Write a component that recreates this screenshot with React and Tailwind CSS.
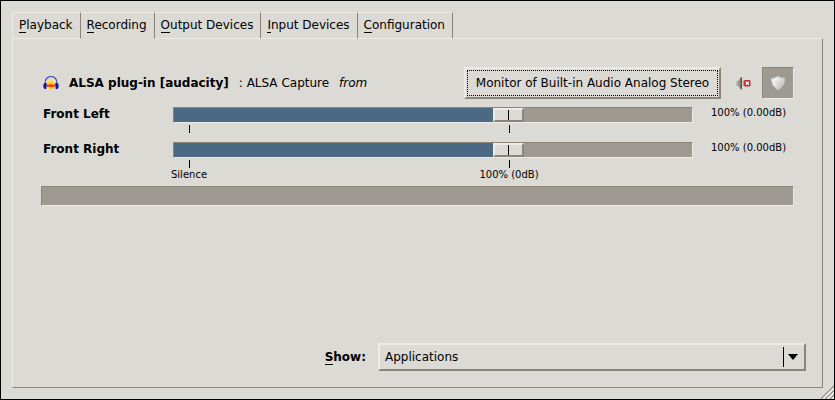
import React, { useState } from "react";

const BEVEL_OUT =
  "border-2 border-t-[#ecebe7] border-l-[#ecebe7] border-r-[#8c8478] border-b-[#8c8478]";
const BEVEL_IN =
  "border border-t-[#8c8478] border-l-[#8c8478] border-r-[#ecebe7] border-b-[#ecebe7]";

const tabs = ["Playback", "Recording", "Output Devices", "Input Devices", "Configuration"];

const MAX_VOLUME = 152.5;

function Mnemonic({ text }) {
  return (
    <span>
      <span className="border-b border-black">{text[0]}</span>
      {text.slice(1)}
    </span>
  );
}

function HeadphonesIcon() {
  return (
    <svg viewBox="0 0 16 16" className="h-4 w-4 shrink-0" aria-hidden="true">
      <defs>
        <radialGradient id="glow" cx="0.5" cy="0.6" r="0.5">
          <stop offset="0" stopColor="#ff9a10" />
          <stop offset="0.5" stopColor="#ffc81c" />
          <stop offset="1" stopColor="#ffe27a" />
        </radialGradient>
      </defs>
      <ellipse cx="8" cy="9.4" rx="4.5" ry="5.2" fill="url(#glow)" />
      <path d="M3.5 10l1.300-.8 1.100.8 1.100-1 1 .9 1.200-.9 1.100 1 2.200-1v2.300l-1.300.7-1-.5-1.200.7-1-.5-1.200.6-1-.7-1.100.5-1.200-.6z" fill="#f5331c" />
      <path d="M2 8.500C1.800 4.200 4.400 1.500 8 1.500s6.200 2.700 6 7" fill="none" stroke="#3434b8" strokeWidth="1.100" />
      <path d="M3.700 8H1.600L.4 9.600v2.600l1.200 1.800h1.700zM12.300 8h2.100l1.200 1.600v2.600L14.400 14h-1.700z" fill="#1212a8" />
    </svg>
  );
}

function MutedIcon() {
  return (
    <svg viewBox="0 0 16 16" className="h-4 w-4" aria-hidden="true">
      <defs>
        <linearGradient id="cone" x1="0" y1="0" x2="1" y2="0">
          <stop offset="0" stopColor="#c4c5c1" />
          <stop offset="0.6" stopColor="#8d8f8b" />
          <stop offset="1" stopColor="#4c4e4a" />
        </linearGradient>
      </defs>
      <path d="M1 6h2l3-4h1v12.500H6L3 11H1z" fill="url(#cone)" />
      <path d="M8 5.500q1 2.700 0 5.500" stroke="#8d8f8b" fill="none" />
      <rect x="9" y="5" width="6.500" height="6.500" rx="1.200" fill="#d4262c" />
      <path d="M10.800 6.800l3 3M13.800 6.800l-3 3" stroke="#fff" strokeWidth="1.300" />
    </svg>
  );
}

function ShieldIcon() {
  return (
    <svg viewBox="0 0 16 16" className="h-4 w-4" aria-hidden="true">
      <defs>
        <linearGradient id="shield" x1="0" y1="0" x2="1" y2="1">
          <stop offset="0.2" stopColor="#ecedea" />
          <stop offset="0.5" stopColor="#dcddd9" />
          <stop offset="1" stopColor="#aeb0ab" />
        </linearGradient>
      </defs>
      <path
        d="M8 1.200c1.500 1.400 3.500 2.200 6.300 2.200.3 5-1.800 8.800-6.300 11.100C3.500 12.200 1.400 8.400 1.700 3.400 4.500 3.400 6.500 2.600 8 1.200z"
        fill="url(#shield)"
        stroke="#d2d3cf"
      />
      <path d="M8 3.300C6.700 4.300 5 4.800 3.400 5c.1 3 1.200 5.500 3.400 7.300" fill="none" stroke="#fff" strokeOpacity="0.6" />
    </svg>
  );
}

function TabBar({ active, onSelect }) {
  return (
    <div role="tablist" className="flex">
      {tabs.map((tab, i) => (
        <button
          key={tab}
          role="tab"
          aria-selected={i === active}
          onClick={() => onSelect(i)}
          className={`relative h-[27px] border-t border-r border-b border-t-[#ecebe7] border-r-[#8c8478] pr-[7px] pb-px pl-[6px] ${
            i === 0 ? "border-l border-l-[#ecebe7]" : ""
          } ${i === active ? "border-b-[#dcdad5]" : "border-b-[#ecebe7]"}`}
        >
          <Mnemonic text={tab} />
        </button>
      ))}
    </div>
  );
}

function Mark({ label }) {
  return (
    <div className="flex w-0 flex-col items-center">
      <span className="h-2 w-px bg-black" />
      {label && <span className="text-[10px] leading-[14px] whitespace-nowrap">{label}</span>}
    </div>
  );
}

function Channel({ name, labels = [] }) {
  const [volume, setVolume] = useState(100);
  const fill = (volume / MAX_VOLUME) * 100;
  const id = name.toLowerCase().replace(" ", "-");

  return (
    <div className="flex items-start">
      <label htmlFor={id} className="w-[132px] shrink-0 pl-[2px] leading-[14px] font-bold">
        {name}
      </label>
      <div className="min-w-0 flex-1">
        <input
          id={id}
          type="range"
          min="0"
          max={MAX_VOLUME}
          step="0.5"
          value={volume}
          onChange={(e) => setVolume(Number(e.target.value))}
          style={{
            backgroundImage: `linear-gradient(to right, #4b6983 ${fill}%, #9e9991 ${fill}%)`,
          }}
          className={`block h-4 w-full appearance-none ${BEVEL_IN} [&::-webkit-slider-thumb]:h-[14px] [&::-webkit-slider-thumb]:w-[31px] [&::-webkit-slider-thumb]:appearance-none [&::-webkit-slider-thumb]:border-2 [&::-webkit-slider-thumb]:border-t-[#ecebe7] [&::-webkit-slider-thumb]:border-l-[#ecebe7] [&::-webkit-slider-thumb]:border-r-[#8c8478] [&::-webkit-slider-thumb]:border-b-[#8c8478] [&::-webkit-slider-thumb]:bg-[#dcdad5] [&::-webkit-slider-thumb]:bg-[linear-gradient(#000,#000)] [&::-webkit-slider-thumb]:bg-[size:1px_100%] [&::-webkit-slider-thumb]:bg-center [&::-webkit-slider-thumb]:bg-no-repeat`}
        />
        <div className="mx-4 flex pt-[2px]">
          <Mark label={labels[0]} />
          <div style={{ width: `${(100 / MAX_VOLUME) * 100}%` }} />
          <Mark label={labels[1]} />
        </div>
      </div>
      <output htmlFor={id} className="w-[101px] shrink-0 pl-[18px] text-[10px] leading-3">
        {volume}% (0.00dB)
      </output>
    </div>
  );
}

function StreamHeader() {
  const [locked, setLocked] = useState(true);

  return (
    <div className="flex h-8 items-center">
      <div className="flex flex-1 items-center pl-[2px]">
        <HeadphonesIcon />
        <b className="ml-[10px]">ALSA plug-in [audacity]</b>
        <span className="ml-[10px]">: ALSA Capture</span>
        <i className="ml-[10px]">from</i>
      </div>
      <button className={`h-8 min-w-[257px] p-px ${BEVEL_OUT}`}>
        <span className="flex h-[26px] items-center justify-center border border-dotted border-black px-1">
          Monitor of Built-in Audio Analog Stereo
        </span>
      </button>
      <button aria-label="Mute audio" className="ml-[6px] flex h-8 w-8 items-center justify-center">
        <MutedIcon />
      </button>
      <button
        aria-label="Lock channels together"
        aria-pressed={locked}
        onClick={() => setLocked(!locked)}
        className={`ml-[3px] flex h-8 w-8 items-center justify-center bg-[#9e9991] ${BEVEL_IN}`}
      >
        <ShieldIcon />
      </button>
    </div>
  );
}

function ShowFilter() {
  return (
    <div className="mt-auto flex items-center self-end">
      <label htmlFor="show" className="mr-[12px] font-bold">
        <Mnemonic text="Show:" />
      </label>
      <div className={`grid h-7 w-[428px] items-center ${BEVEL_OUT}`}>
        <select id="show" className="col-start-1 row-start-1 h-6 w-full appearance-none pl-[5px] outline-none">
          <option>Applications</option>
          <option>All Streams</option>
          <option>Virtual Streams</option>
        </select>
        <div className="pointer-events-none col-start-1 row-start-1 flex items-center justify-self-end pr-[6px]">
          <span className="h-5 w-px bg-black" />
          <svg viewBox="0 0 10 6" className="ml-1 h-[6px] w-[10px]" aria-hidden="true">
            <path d="M0 0h10L5 6z" />
          </svg>
        </div>
      </div>
    </div>
  );
}

function ResizeGrip() {
  return (
    <svg viewBox="0 0 14 14" className="absolute right-0 bottom-0 h-[14px] w-[14px]" aria-hidden="true">
      <path d="M1 14L14 1M5.500 14L14 5.500M10 14l4-4" stroke="#9e978c" strokeWidth="1.600" />
      <path d="M3 14L14 3M7.500 14L14 7.500M12 14l2-2" stroke="#f6f5f2" strokeWidth="1.300" />
    </svg>
  );
}

export default function App() {
  const [active, setActive] = useState(1);

  return (
    <main className="relative flex min-h-screen flex-col border border-black bg-[#dcdad5] px-[11px] pt-[11px] pb-[11px] font-['DejaVu_Sans',sans-serif] text-[12px] leading-4 text-black">
      <TabBar active={active} onSelect={setActive} />
      <section className="-mt-px flex flex-1 flex-col border border-t-[#ecebe7] border-r-[#8c8478] border-b-[#8c8478] border-l-[#ecebe7] px-4 pt-7 pb-4">
        <div className="flex flex-col pr-3 pl-3">
          <StreamHeader />
          <div className="mt-2 flex flex-col gap-[9px]">
            <Channel name="Front Left" />
            <Channel name="Front Right" labels={["Silence", "100% (0dB)"]} />
          </div>
          <div className={`mt-1 h-5 bg-[#9e9991] ${BEVEL_IN}`} />
        </div>
        <ShowFilter />
      </section>
      <ResizeGrip />
    </main>
  );
}
